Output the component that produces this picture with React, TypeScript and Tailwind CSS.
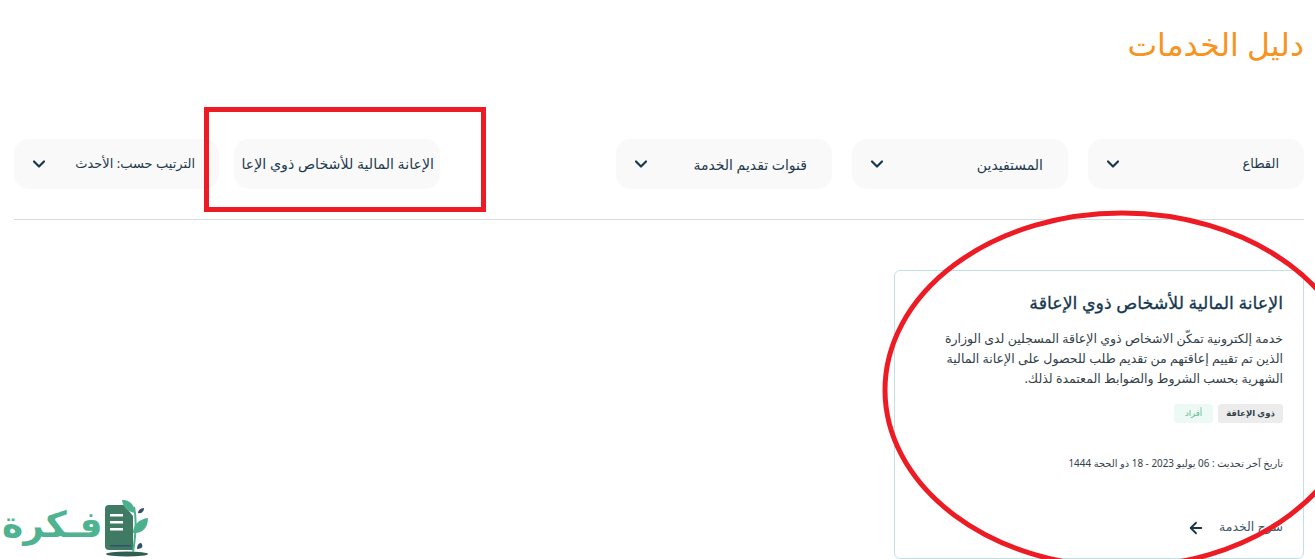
import { ChevronDown, ArrowLeft } from "lucide-react";

function Filter({ label, className, textClass }: { label: string; className: string; textClass: string }) {
  return (
    <div className={`flex h-[50px] items-center justify-between rounded-[15px] bg-[#f9f9f9] pr-[25px] pl-[15px] ${className}`}>
      <span className={`truncate text-[#1f3a4d] ${textClass}`}>{label}</span>
      <ChevronDown className="h-[20px] w-[20px] shrink-0 text-[#16384f]" strokeWidth={2.6} />
    </div>
  );
}

function Logo() {
  return (
    <div dir="rtl" className="absolute bottom-0 left-0 h-[69px] w-[160px]">
      <svg width="52" height="64" viewBox="0 0 52 64" className="absolute left-[100px] top-[5px]">
        <ellipse cx="27" cy="59" rx="21" ry="2.5" fill="#2f5f4f" />
        <path d="M9 10 h15 l9 11 v34 h-24 a4 4 0 0 1 -4 -4 v-37 a4 4 0 0 1 4 -4z" fill="#3f7a63" />
        <rect x="10" y="19" width="13" height="2.5" fill="#fff" />
        <rect x="10" y="26" width="13" height="2.5" fill="#fff" />
        <rect x="10" y="33" width="13" height="2.5" fill="#fff" />
        <rect x="10" y="50" width="21" height="1.5" fill="#34506b" />
        <path d="M33 57 C35 45 37 25 34 12" stroke="#4bb08e" strokeWidth="2" fill="none" />
        <path d="M22 5 C29 4 35 10 35 18 C28 17 23 13 22 5z" fill="#4bb08e" />
        <path d="M33 38 C33 30 39 24 48 23 C48 33 42 39 33 38z" fill="#4bb08e" />
        <path d="M38 18 C38 15 41 13 44 13 C44 16 42 19 38 18z" fill="#34506b" />
        <path d="M37 54 C37 50 39 48 41 48 C44 51 42 54 37 54z" fill="#34506b" />
      </svg>
      <span className="absolute left-[2px] top-[4px] text-[36px] leading-[60px] font-black whitespace-nowrap text-[#4fb391]">فـكرة</span>
    </div>
  );
}

export default function App() {
  return (
    <div dir="rtl" className="relative h-[559px] overflow-hidden bg-white pr-[11px] pl-[14px] font-['Noto_Sans','DejaVu_Sans',sans-serif]">
      <h1 className="pt-[23px] text-[31.5px] leading-[42px] font-normal text-[#f7941d]">دليل الخدمات</h1>
      <div className="mt-[74px] flex justify-between">
        <div className="flex gap-[20px]">
          <Filter className="w-[216px]" textClass="text-[13px]" label="القطاع" />
          <Filter className="w-[216px]" textClass="text-[14px]" label="المستفيدين" />
          <Filter className="w-[216px]" textClass="text-[14px]" label="قنوات تقديم الخدمة" />
        </div>
        <div className="flex gap-[15px]">
          <div className="flex h-[50px] w-[206px] items-center rounded-[15px] bg-[#f9f9f9] pr-[6px] pl-[8px]">
            <span className="overflow-hidden text-[14.2px] whitespace-nowrap text-[#1f3a4d]">الإعانة المالية للأشخاص ذوي الإعاقة</span>
          </div>
          <Filter className="w-[205px] !pr-[24px]" textClass="text-[13px]" label="الترتيب حسب: الأحدث" />
        </div>
      </div>
      <div className="mt-[30px] h-px bg-[#d5dde3]" />
      <div className="mt-[50px] flex h-[289px] w-[410px] flex-col rounded-[6px] border border-[#c0e0e6] px-[20px] pt-[19px] pb-[21px]">
        <h2 className="text-[17.4px] leading-[24px] font-medium text-[#16384f] [-webkit-text-stroke:0.3px_#16384f]">الإعانة المالية للأشخاص ذوي الإعاقة</h2>
        <p className="mt-[15px] pl-[24px] text-[12.55px] leading-[20px] text-[#333f48]">
          خدمة إلكترونية تمكّن الاشخاص ذوي الإعاقة المسجلين لدى الوزارة الذين تم تقييم إعاقتهم من تقديم طلب للحصول على الإعانة المالية الشهرية بحسب الشروط والضوابط المعتمدة لذلك.
        </p>
        <div className="mt-[15px] flex gap-[5px]">
          <span className="flex h-[19px] w-[65px] items-center justify-center rounded-[3px] bg-[#ececec] text-[8.5px] font-bold text-[#333f48]">ذوي الإعاقة</span>
          <span className="flex h-[19px] w-[39px] items-center justify-center rounded-[3px] bg-[#edf9f4] text-[8.5px] text-[#62b892]">أفراد</span>
        </div>
        <p className="mt-[33px] text-[9.9px] leading-[14px] text-[#333f48]">تاريخ آخر تحديث : 06 يوليو 2023 - 18 ذو الحجة 1444</p>
        <div className="mt-auto flex items-center gap-[14px]">
          <span className="text-[12.5px] text-[#3d5566]">شرح الخدمة</span>
          <ArrowLeft className="h-[18px] w-[18px] text-[#16384f]" strokeWidth={2.4} />
        </div>
      </div>
      <div className="absolute top-[107px] left-[204px] h-[105px] w-[282px] border-[5px] border-[#ed1c24]" />
      <svg className="pointer-events-none absolute top-0 left-0" width="1315" height="559">
        <ellipse cx="1122" cy="390" rx="237" ry="177" fill="none" stroke="#ed1c24" strokeWidth="5" />
      </svg>
      <Logo />
    </div>
  );
}
